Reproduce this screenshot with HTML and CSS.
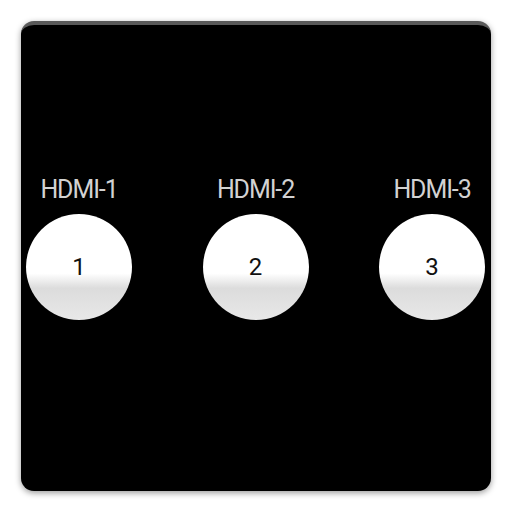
FILE: index.html
```html
<!DOCTYPE html>
<html lang="en">
<head>
    <meta charset="UTF-8">
    <meta name="viewport" content="width=device-width, initial-scale=1.0">
    <title>HDMI Inputs</title>
    <link rel="stylesheet" href="styles.css">
</head>
<body>

<div class="panel">
    <div class="inputs">
        <div class="input">
            <div class="input-label">HDMI-1</div>
            <button class="input-btn">1</button>
        </div>
        <div class="input">
            <div class="input-label">HDMI-2</div>
            <button class="input-btn">2</button>
        </div>
        <div class="input">
            <div class="input-label">HDMI-3</div>
            <button class="input-btn">3</button>
        </div>
    </div>
</div>

</body>
</html>
```

FILE: styles.css
```css
body {
    font-family: Roboto, "Liberation Sans", sans-serif;
    background-color: #fff;
    margin: 0;
    padding: 21px;
}

.panel {
    width: 470px;
    height: 470px;
    box-sizing: border-box;
    background-color: #000;
    border-radius: 13px;
    border-top: 4px solid #5a5a5a;
    box-shadow: 0 2px 6px rgba(0, 0, 0, 0.4);
    padding: 151px 6px 0 5px;
}

.inputs {
    display: flex;
    justify-content: space-between;
}

.input {
    display: flex;
    flex-direction: column;
    align-items: center;
    gap: 10px;
}

.input-label {
    color: #d2d2d2;
    font-size: 25px;
    line-height: 28px;
    letter-spacing: -1.1px;
}

.input-btn {
    width: 106px;
    height: 106px;
    border: none;
    border-radius: 50%;
    padding: 0;
    font-family: Roboto, "Liberation Sans", sans-serif;
    font-size: 24px;
    color: #111;
    background: linear-gradient(to bottom, #fff 0%, #fff 56%, #dcdcdc 70%, #e8e8e8 100%);
    cursor: pointer;
}
```
